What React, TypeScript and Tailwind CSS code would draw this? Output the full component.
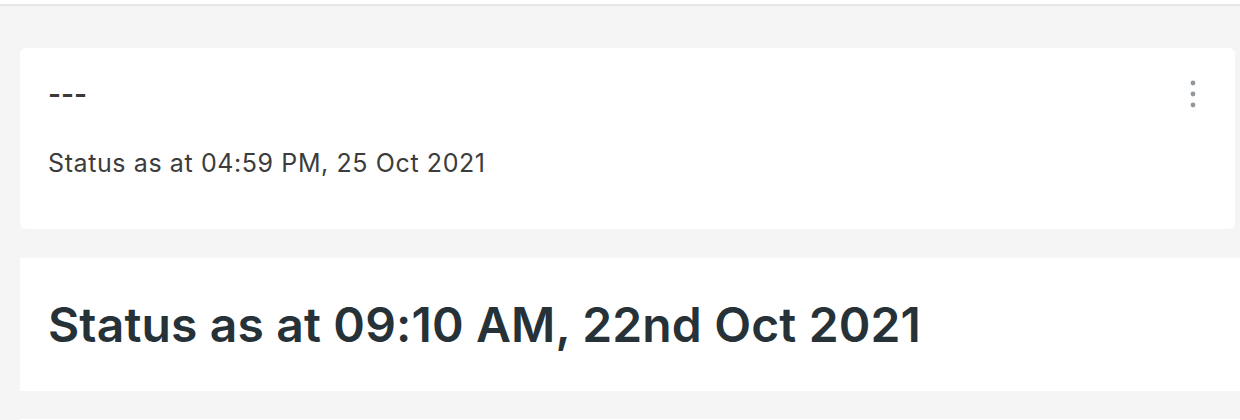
const font = { fontFamily: "Inter, 'Noto Sans', sans-serif" };

function MoreVert() {
  return (
    <svg width="8" height="30" viewBox="0 0 8 30" className="text-[#8e989e]">
      <circle cx="4" cy="4" r="2.4" fill="currentColor" />
      <circle cx="4" cy="15" r="2.4" fill="currentColor" />
      <circle cx="4" cy="26" r="2.4" fill="currentColor" />
    </svg>
  );
}

export default function App() {
  return (
    <div
      className="h-[420px] w-[1240px] overflow-hidden bg-[#f5f5f5] font-['Inter',sans-serif]"
    >
      <div className="h-[4px] bg-white" />
      <div className="h-[2px] bg-[#e6e6e6]" />

      <div className="pt-[42px] pl-[20px]">
        <div className="h-[181px] w-[1215px] rounded-md bg-white px-7 pt-7">
          <div className="flex items-start justify-between">
            <span className="text-[28px] leading-[36px] font-semibold text-[#3a3a3a]">
              ---
            </span>
            <span className="mt-[3px] mr-[10px]">
              <MoreVert />
            </span>
          </div>
          <p className="mt-[36px] text-[25px] leading-[30px] tracking-[0.6px] text-[#3c3c3c]">
            Status as at 04:59 PM, 25 Oct 2021
          </p>
        </div>

        <div className="mt-[29px] flex h-[133px] w-[1240px] items-center bg-white px-7">
          <h1 className="text-[48px] leading-[58px] font-semibold tracking-[0.15px] text-[#263238]">
            Status as at 09:10 AM, 22nd Oct 2021
          </h1>
        </div>

        <div className="mt-[28px] h-[40px] w-[1240px] bg-white" />
      </div>
    </div>
  );
}
